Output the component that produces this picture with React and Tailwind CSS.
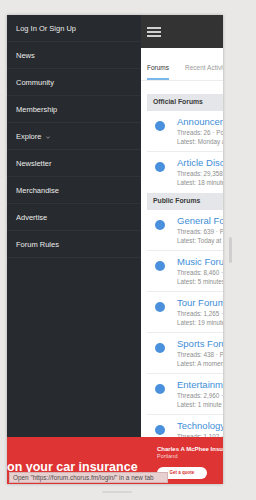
import React from "react";

const menu = [
  "Log In Or Sign Up",
  "News",
  "Community",
  "Membership",
  "Explore",
  "Newsletter",
  "Merchandise",
  "Advertise",
  "Forum Rules",
];

const official = [
  { t: "Announcements", a: "Threads: 26 · Posts: 1,204", b: "Latest: Monday at 4:12 PM" },
  { t: "Article Discussion", a: "Threads: 29,358 · Posts: 410,221", b: "Latest: 18 minutes ago" },
];

const pub = [
  { t: "General Forum", a: "Threads: 639 · Posts: 92,118", b: "Latest: Today at 9:41 AM" },
  { t: "Music Forum", a: "Threads: 8,460 · Posts: 771,004", b: "Latest: 5 minutes ago" },
  { t: "Tour Forum", a: "Threads: 1,265 · Posts: 40,312", b: "Latest: 19 minutes ago" },
  { t: "Sports Forum", a: "Threads: 438 · Posts: 130,885", b: "Latest: A moment ago" },
  { t: "Entertainment", a: "Threads: 2,960 · Posts: 301,552", b: "Latest: 1 minute ago" },
  { t: "Technology", a: "Threads: 1,102 · Posts: 88,020", b: "Latest: 3 minutes ago" },
];

function Row({ f, last }) {
  return (
    <div className={`flex pl-[8px] h-[41px] ${last ? "" : "border-b border-[#ececec]"}`}>
      <div className="w-[10px] h-[10px] rounded-full bg-[#4a90dc] mt-[10px] shrink-0" />
      <div className="ml-[12px] pt-[5px] whitespace-nowrap">
        <div className="text-[9.5px] leading-[12px] text-[#3e8ed8]">{f.t}</div>
        <div className="text-[6.3px] leading-[9px] text-[#8e8e8e]">{f.a}</div>
        <div className="text-[6.3px] leading-[10px] text-[#8e8e8e]">{f.b}</div>
      </div>
    </div>
  );
}

function Section({ title, items }) {
  return (
    <div>
      <div className="h-[17px] bg-[#e4e6e9] flex items-center pl-[6px] text-[6.8px] font-bold text-[#3a3a3a] whitespace-nowrap">
        {title}
      </div>
      {items.map((f, i) => (
        <Row key={f.t} f={f} last={i === items.length - 1 && title === "Official Forums"} />
      ))}
    </div>
  );
}

export default function App() {
  return (
    <div className="relative w-[256px] h-[500px] bg-[#e9e8e6] overflow-hidden font-['Liberation_Sans',Arial,sans-serif]">
      <div className="pl-[7px] pt-[15px]">
        <div className="relative w-[216px] h-[469px] flex overflow-hidden shadow-[0_0_3px_rgba(0,0,0,0.25)]">
          {/* drawer */}
          <div className="w-[134px] shrink-0 bg-[#272a2e]">
            {menu.map((m) => (
              <div
                key={m}
                className="h-[27px] border-b border-[#30343a] flex items-center pl-[9px] pt-[2px] text-[7.5px] text-[#ececec]"
              >
                {m}
                {m === "Explore" && (
                  <svg className="ml-[5px]" width="4" height="3" viewBox="0 0 4 3">
                    <path d="M0.3 0.5 L2 2.3 L3.7 0.5" stroke="#bbb" strokeWidth="0.7" fill="none" />
                  </svg>
                )}
              </div>
            ))}
          </div>
          {/* panel */}
          <div className="w-[82px] shrink-0 bg-white overflow-hidden">
            <div className="h-[33px] bg-[#333333] flex items-center pl-[6px]">
              <div className="flex flex-col gap-[2.5px] pt-[1px]">
                <div className="w-[14px] h-[1.5px] bg-[#d0d0d0]" />
                <div className="w-[14px] h-[1.5px] bg-[#d0d0d0]" />
                <div className="w-[14px] h-[1.5px] bg-[#d0d0d0]" />
              </div>
            </div>
            <div className="h-[33px] border-b border-[#ececec] flex items-end px-[6px] gap-[16px] whitespace-nowrap">
              <div className="text-[6.5px] leading-[10px] pb-[5px] border-b-2 border-[#7ab8ec] text-[#333]">Forums</div>
              <div className="text-[6.5px] leading-[10px] pb-[5px] border-b-2 border-transparent text-[#9a9a9a]">Recent Activity</div>
            </div>
            <div className="mx-[6px] mt-[13px] w-[200px]">
              <Section title="Official Forums" items={official} />
              <Section title="Public Forums" items={pub} />
            </div>
          </div>
          {/* ad */}
          <div className="absolute left-0 bottom-0 w-[216px] h-[47px] bg-[#df3434] flex overflow-hidden">
            <div className="w-[150px] shrink-0 pt-[23px]">
              <div className="text-[12.5px] leading-[14px] font-bold text-white whitespace-nowrap">on your car insurance</div>
            </div>
            <div className="pt-[8px] whitespace-nowrap">
              <div className="text-[6px] leading-[8px] font-bold text-white">Charles A McPhee Insurance</div>
              <div className="text-[5.5px] leading-[7px] text-[#f6d6d6]">Portland</div>
              <div className="mt-[7px] w-[50px] h-[12px] rounded-full bg-white flex items-center justify-center text-[4.5px] font-bold text-[#d63030]">
                Get a quote
              </div>
            </div>
          </div>
        </div>
      </div>
      {/* tooltip */}
      <div className="absolute left-[9px] top-[472px] w-[159px] h-[11px] bg-[#e8d0d0] border border-[#d4b3b3] flex items-center pl-[3px] text-[6.4px] text-[#4d4d4d] whitespace-nowrap overflow-hidden">
        Open "https://forum.chorus.fm/login/" in a new tab
      </div>
      {/* scrollbars */}
      <div className="absolute left-[229px] top-[237px] w-[3px] h-[26px] rounded-full bg-[#cfcfcf]" />
      <div className="absolute left-[102px] top-[491px] w-[30px] h-[2px] rounded-full bg-[#d6d6d6]" />
    </div>
  );
}
